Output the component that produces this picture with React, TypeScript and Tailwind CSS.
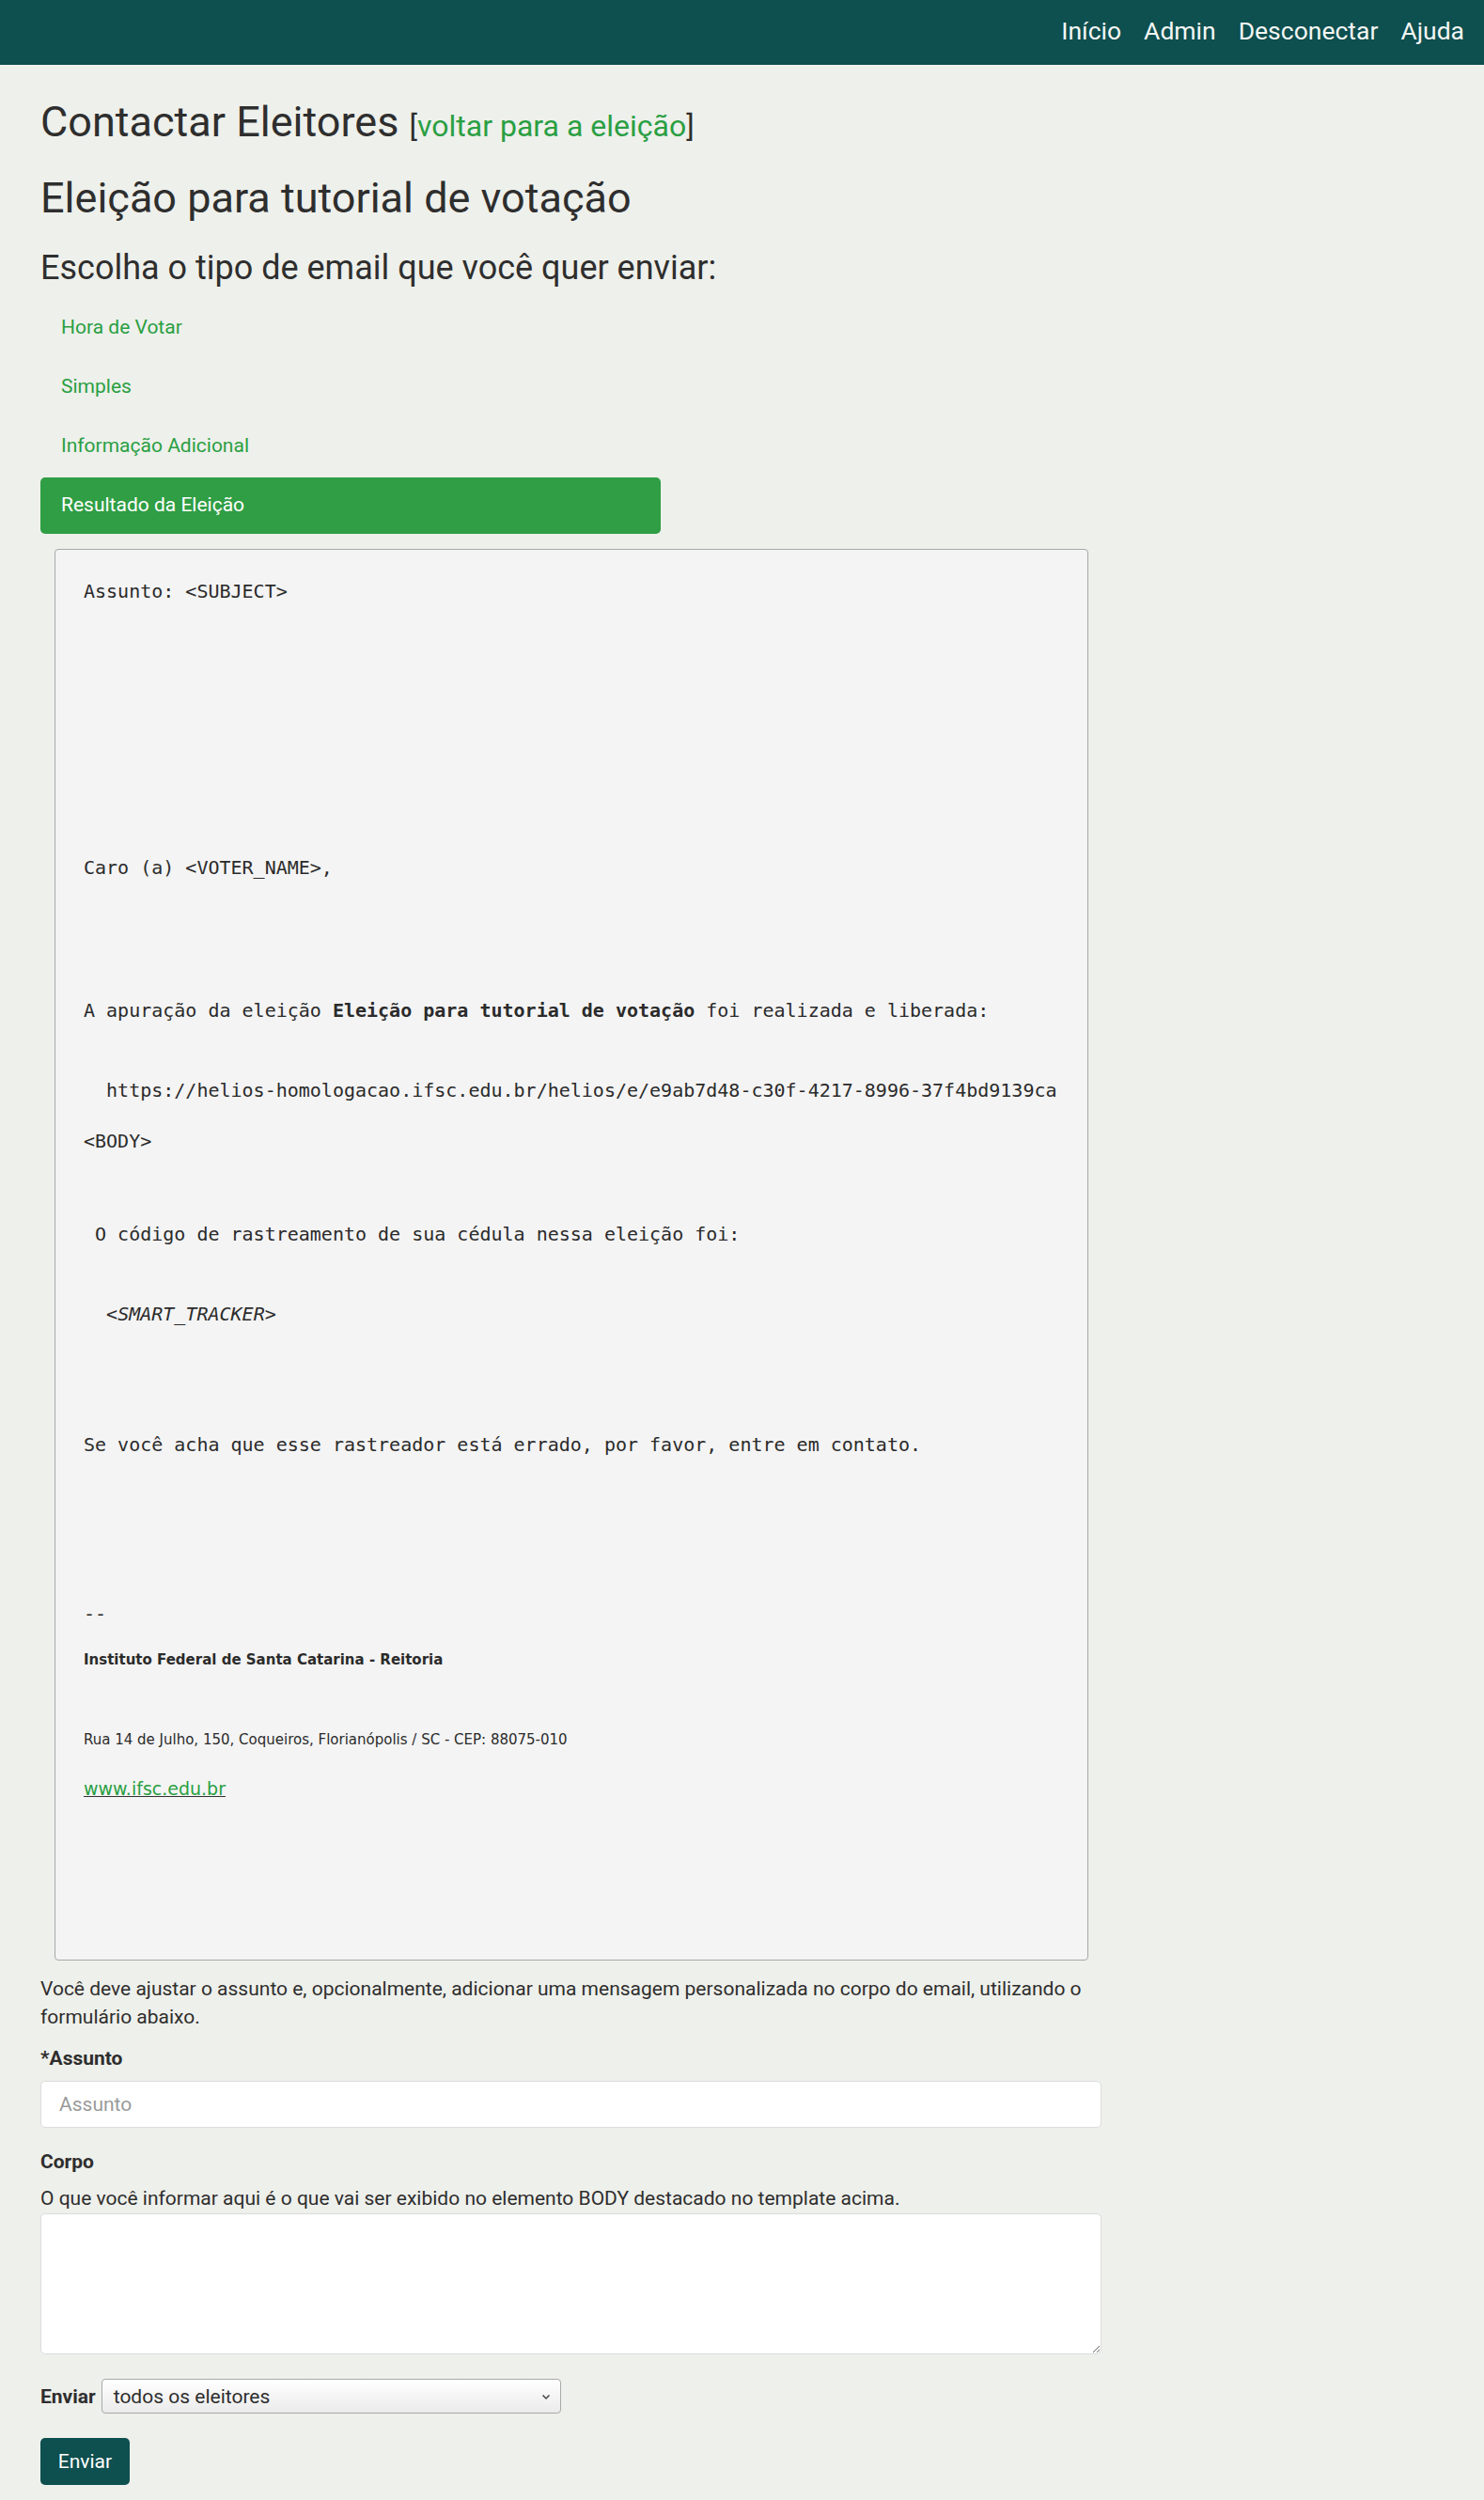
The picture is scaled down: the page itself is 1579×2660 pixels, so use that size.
import React from 'react';

const NavBar: React.FC = () => (
  <nav className="h-[69px] bg-[#0e4f4f] flex items-center justify-end gap-[24px] pr-[21px] pb-[3px] text-[26.5px] text-[#f4f7f4]">
    <a href="#">Início</a>
    <a href="#">Admin</a>
    <a href="#">Desconectar</a>
    <a href="#">Ajuda</a>
  </nav>
);

const pills = ['Hora de Votar', 'Simples', 'Informação Adicional', 'Resultado da Eleição'];

const EmailTemplate: React.FC = () => (
  <div className="ml-[15px] mt-[16px] w-[1100px] h-[1502px] bg-[#f4f4f4] border border-[#a8a8a8] rounded-[4px] pl-[30px] pt-[32px] text-[#2b2b2b]">
    <div className="font-['DejaVu_Sans_Mono',monospace] text-[20px] leading-[24px] whitespace-pre">
      <div>Assunto: &lt;SUBJECT&gt;</div>
      <div className="mt-[270px]">Caro (a) &lt;VOTER_NAME&gt;,</div>
      <div className="mt-[128px]">
        A apuração da eleição <b>Eleição para tutorial de votação</b> foi realizada e liberada:
      </div>
      <div className="mt-[61px]">  https://helios-homologacao.ifsc.edu.br/helios/e/e9ab7d48-c30f-4217-8996-37f4bd9139ca</div>
      <div className="mt-[30px]">&lt;BODY&gt;</div>
      <div className="mt-[75px]"> O código de rastreamento de sua cédula nessa eleição foi:</div>
      <div className="mt-[61px]">  <i>&lt;SMART_TRACKER&gt;</i></div>
      <div className="mt-[115px]">Se você acha que esse rastreador está errado, por favor, entre em contato.</div>
      <div className="mt-[156px]">--</div>
    </div>
    <div className="font-['DejaVu_Sans',sans-serif]">
      <div className="mt-[28px] text-[15px] leading-[18px] font-bold">Instituto Federal de Santa Catarina - Reitoria</div>
      <div className="mt-[67px] text-[15px] leading-[18px]">Rua 14 de Julho, 150, Coqueiros, Florianópolis / SC - CEP: 88075-010</div>
      <div className="mt-[32px] text-[19px] leading-[23px]">
        <a href="#" className="text-[#2a9f43] underline decoration-[#333]">www.ifsc.edu.br</a>
      </div>
    </div>
  </div>
);

const App: React.FC = () => {
  return (
    <div className="min-h-screen w-full bg-[#eef0eb] font-['Roboto',sans-serif] text-[#2e2e2e]">
      <NavBar />
      <main className="px-[43px] w-[1215px]">
        <h1 className="mt-[34px] text-[45px] leading-[1.2]">
          Contactar Eleitores <span className="text-[32px]">[<a href="#" className="text-[#2a9f43]">voltar para a eleição</a>]</span>
        </h1>
        <h2 className="mt-[27px] text-[45px] leading-[1.2]">Eleição para tutorial de votação</h2>
        <h3 className="mt-[26px] text-[36px] leading-[1.2]">Escolha o tipo de email que você quer enviar:</h3>

        <div className="mt-[12px] flex flex-col gap-[3px] w-[660px]">
          {pills.map((p, i) => (
            <a
              key={p}
              href="#"
              className={
                i === 3
                  ? 'h-[60px] flex items-center px-[22px] text-[21px] rounded-[5px] bg-[#2f9e44] text-white'
                  : 'h-[60px] flex items-center px-[22px] text-[21px] rounded-[5px] text-[#2a9f43]'
              }
            >
              {p}
            </a>
          ))}
        </div>

        <EmailTemplate />

        <div className="w-[1129px] text-[21px] leading-[30px]">
          <p className="mt-[15px]">
            Você deve ajustar o assunto e, opcionalmente, adicionar uma mensagem personalizada no corpo do email, utilizando o formulário abaixo.
          </p>
          <label className="block mt-[14px] font-bold">*Assunto</label>
          <input
            className="mt-[9px] w-full h-[50px] bg-white border border-[#dcdcdc] rounded-[5px] px-[19px] text-[21px] placeholder:text-[#9a9a9a] outline-none"
            placeholder="Assunto"
          />
          <label className="block mt-[21px] font-bold">Corpo</label>
          <p className="mt-[9px]">O que você informar aqui é o que vai ser exibido no elemento BODY destacado no template acima.</p>
          <textarea className="block mt-[1px] w-full h-[150px] bg-white border border-[#dcdcdc] rounded-[5px] outline-none" />

          <div className="mt-[26px] flex items-center gap-[6px]">
            <span className="font-bold">Enviar</span>
            <div className="relative w-[489px] h-[37px] rounded-[4px] border border-[#a9a9a9] bg-gradient-to-b from-white to-[#ebebeb] flex items-center pl-[12px] text-[21px]">
              todos os eleitores
              <svg className="absolute right-[10px] top-[15px]" width="10" height="7" viewBox="0 0 10 7" fill="none">
                <path d="M1.5 1.5 L5 5 L8.5 1.5" stroke="#444" strokeWidth="1.5" />
              </svg>
            </div>
          </div>

          <button className="mt-[26px] h-[50px] w-[95px] rounded-[5px] bg-[#0e4f4f] text-white text-[21px]">Enviar</button>
        </div>
        <div className="h-[16px]" />
      </main>
    </div>
  );
};

export default App;
